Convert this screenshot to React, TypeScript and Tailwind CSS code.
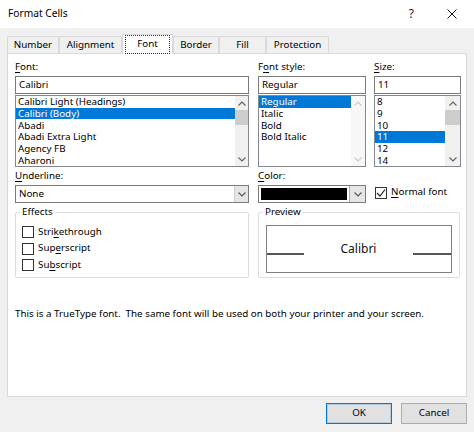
import type { ReactNode } from 'react';

const font = { fontFamily: '"Noto Sans", "Open Sans", sans-serif' };

function Key({ children }: { children: ReactNode }) {
  return <span className="underline underline-offset-[2px] decoration-[1px]">{children}</span>;
}

function Chevron({ up = false, color = '#606060' }: { up?: boolean; color?: string }) {
  return (
    <svg width="8" height="5" viewBox="0 0 8 5" fill="none">
      <polyline
        points={up ? '0.5,4.5 4,1 7.5,4.5' : '0.5,0.5 4,4 7.5,0.5'}
        stroke={color}
        strokeWidth="1.1"
      />
    </svg>
  );
}

function ScrollBar({ disabled = false, width }: { disabled?: boolean; width: string }) {
  const color = disabled ? '#c8c8c8' : '#606060';
  return (
    <div className={`flex h-full shrink-0 flex-col items-center ${width} ${disabled ? 'bg-[#f7f7f7]' : 'bg-[#f0f0f0]'}`}>
      <div className="flex h-[14px] w-full items-center justify-center">
        <Chevron up color={color} />
      </div>
      {disabled ? <div className="flex-1" /> : <div className="h-[15px] w-full bg-[#cdcdcd]" />}
      <div className="flex-1" />
      <div className="flex h-[14px] w-full items-center justify-center">
        <Chevron color={color} />
      </div>
    </div>
  );
}

function ListBox({
  items,
  selected,
  disabled,
  barWidth,
}: {
  items: string[];
  selected: number;
  disabled?: boolean;
  barWidth: string;
}) {
  return (
    <div className="mt-[1px] flex h-[72px] border border-[#828790] bg-white">
      <div className="flex-1 overflow-hidden">
        {items.map((item, i) => (
          <div
            key={item}
            className={`flex h-[11.7px] items-center whitespace-nowrap pl-[2px] leading-[11px] ${
              i === selected ? 'bg-[#0078d7] text-white' : 'text-black'
            }`}
          >
            {item}
          </div>
        ))}
      </div>
      <ScrollBar disabled={disabled} width={barWidth} />
    </div>
  );
}

function TextBox({ value }: { value: string }) {
  return (
    <div className="flex h-[18px] items-center border border-[#7a7a7a] bg-white pl-[3px] leading-none">
      {value}
    </div>
  );
}

function Label({ children }: { children: ReactNode }) {
  return <div className="flex h-[17px] items-center">{children}</div>;
}

function CheckBox({ checked = false }: { checked?: boolean }) {
  return (
    <div className="flex h-[12px] w-[12px] shrink-0 items-center justify-center border border-[#333333] bg-white">
      {checked && (
        <svg width="10" height="10" viewBox="0 0 10 10" fill="none">
          <polyline points="1,5 4,8 9,1.5" stroke="#222" strokeWidth="1.2" />
        </svg>
      )}
    </div>
  );
}

function CheckRow({ children }: { children: ReactNode }) {
  return (
    <div className="flex h-[16.5px] items-center gap-[4px]">
      <CheckBox />
      <span>{children}</span>
    </div>
  );
}

function GroupBox({ title, children, width }: { title: string; children: ReactNode; width: string }) {
  return (
    <div className={`relative h-[66px] rounded-[2px] border border-[#dcdcdc] ${width}`}>
      <span className="absolute -top-[8px] left-[4px] bg-white px-[2px] leading-[14px]">{title}</span>
      {children}
    </div>
  );
}

const tabs = [
  { label: 'Number', w: 'w-[52px]' },
  { label: 'Alignment', w: 'w-[63px]' },
  { label: 'Font', w: 'w-[51px]', active: true },
  { label: 'Border', w: 'w-[46px]' },
  { label: 'Fill', w: 'w-[47px]' },
  { label: 'Protection', w: 'w-[63px]' },
];

export default function App() {
  return (
    <div className="flex h-[432px] w-[474px] flex-col bg-[#f0f0f0] text-[9.8px] text-black" style={font}>
      {/* title bar */}
      <div className="flex h-[28px] shrink-0 items-center bg-white">
        <span className="pl-[8px] text-[10.2px]">Format Cells</span>
        <span className="ml-auto mr-[33px] text-[12px] text-[#222]">?</span>
        <svg className="mr-[17px]" width="10" height="10" viewBox="0 0 10 10">
          <path d="M0.5 0.5 L9.5 9.5 M9.5 0.5 L0.5 9.5" stroke="#111" strokeWidth="1" />
        </svg>
      </div>

      <div className="flex flex-1 flex-col px-[7px]">
        {/* tabs */}
        <div className="mt-[6px] flex h-[19px] items-end">
          {tabs.map((tab) =>
            tab.active ? (
              <div
                key={tab.label}
                className={`relative z-10 -mb-px flex h-[20px] items-start justify-center border border-b-0 border-[#d9d9d9] bg-white pt-[1px] ${tab.w}`}
              >
                <span className="flex h-[17px] w-[43px] items-center justify-center outline-1 outline-dotted outline-[#333]">
                  {tab.label}
                </span>
              </div>
            ) : (
              <div
                key={tab.label}
                className={`flex h-[17px] items-center justify-center border border-b-0 border-[#d9d9d9] bg-[#f0f0f0] ${tab.w}`}
              >
                {tab.label}
              </div>
            )
          )}
        </div>

        {/* panel */}
        <div className="flex h-[344px] flex-col border border-[#d9d9d9] bg-white pl-[7px] pr-[5px] pt-[5px]">
          <div className="flex gap-[9px]">
            <div className="w-[234px]">
              <Label>
                <Key>F</Key>ont:
              </Label>
              <TextBox value="Calibri" />
              <ListBox
                items={['Calibri Light (Headings)', 'Calibri (Body)', 'Abadi', 'Abadi Extra Light', 'Agency FB', 'Aharoni']}
                selected={1}
                barWidth="w-[13px]"
              />
            </div>
            <div className="w-[108px]">
              <Label>
                F<Key>o</Key>nt style:
              </Label>
              <TextBox value="Regular" />
              <ListBox items={['Regular', 'Italic', 'Bold', 'Bold Italic']} selected={0} disabled barWidth="w-[14px]" />
            </div>
            <div className="ml-[-1px] w-[87px]">
              <Label>
                <Key>S</Key>ize:
              </Label>
              <TextBox value="11" />
              <ListBox items={['8', '9', '10', '11', '12', '14']} selected={3} barWidth="w-[15px]" />
            </div>
          </div>

          <div className="mt-[1px] flex gap-[9px]">
            <div className="w-[234px]">
              <Label>
                <Key>U</Key>nderline:
              </Label>
              <div className="flex h-[18px] border border-[#7a7a7a] bg-white">
                <div className="flex flex-1 items-center pl-[3px]">None</div>
                <div className="flex w-[14px] items-center justify-center border-l border-[#cccccc] bg-[#e5e5e5]">
                  <Chevron color="#555" />
                </div>
              </div>
            </div>
            <div className="w-[108px]">
              <Label>
                <Key>C</Key>olor:
              </Label>
              <div className="flex h-[18px] border border-[#7a7a7a] bg-white">
                <div className="flex flex-1 items-center p-[2px]">
                  <div className="h-full w-full bg-black" />
                </div>
                <div className="flex w-[16px] items-center justify-center border-l border-[#adadad] bg-[#e5e5e5]">
                  <Chevron color="#555" />
                </div>
              </div>
            </div>
            <div className="flex items-end pb-[3px]">
              <div className="flex items-center gap-[4px]">
                <CheckBox checked />
                <span>
                  <Key>N</Key>ormal font
                </span>
              </div>
            </div>
          </div>

          <div className="mt-[9px] flex gap-[9px]">
            <GroupBox title="Effects" width="w-[234px]">
              <div className="flex flex-col pl-[6px] pt-[11px]">
                <CheckRow>
                  Stri<Key>k</Key>ethrough
                </CheckRow>
                <CheckRow>
                  Sup<Key>e</Key>rscript
                </CheckRow>
                <CheckRow>
                  Su<Key>b</Key>script
                </CheckRow>
              </div>
            </GroupBox>
            <GroupBox title="Preview" width="w-[202px]">
              <div className="px-[7px] pt-[12px]">
                <div className="flex h-[48px] items-center border border-[#808080]">
                  <div className="mt-[10px] h-[1.5px] w-[37px] bg-[#555]" />
                  <div className="flex-1 text-center text-[12px] text-[#111]">Calibri</div>
                  <div className="mt-[10px] h-[1.5px] w-[38px] bg-[#555]" />
                </div>
              </div>
            </GroupBox>
          </div>

          <div className="mt-[29px] leading-[14px]">
            This is a TrueType font.&nbsp; The same font will be used on both your printer and your screen.
          </div>
        </div>

        {/* buttons */}
        <div className="mt-[6px] flex justify-end gap-[9px]">
          <button className="flex h-[21px] w-[66px] items-center justify-center border border-[#0078d7] bg-[#e1e1e1] text-[9.8px] outline outline-1 -outline-offset-2 outline-[#0078d7]/20">
            OK
          </button>
          <button className="flex h-[21px] w-[66px] items-center justify-center border border-[#adadad] bg-[#e1e1e1] text-[9.8px]">
            Cancel
          </button>
        </div>
      </div>
    </div>
  );
}
